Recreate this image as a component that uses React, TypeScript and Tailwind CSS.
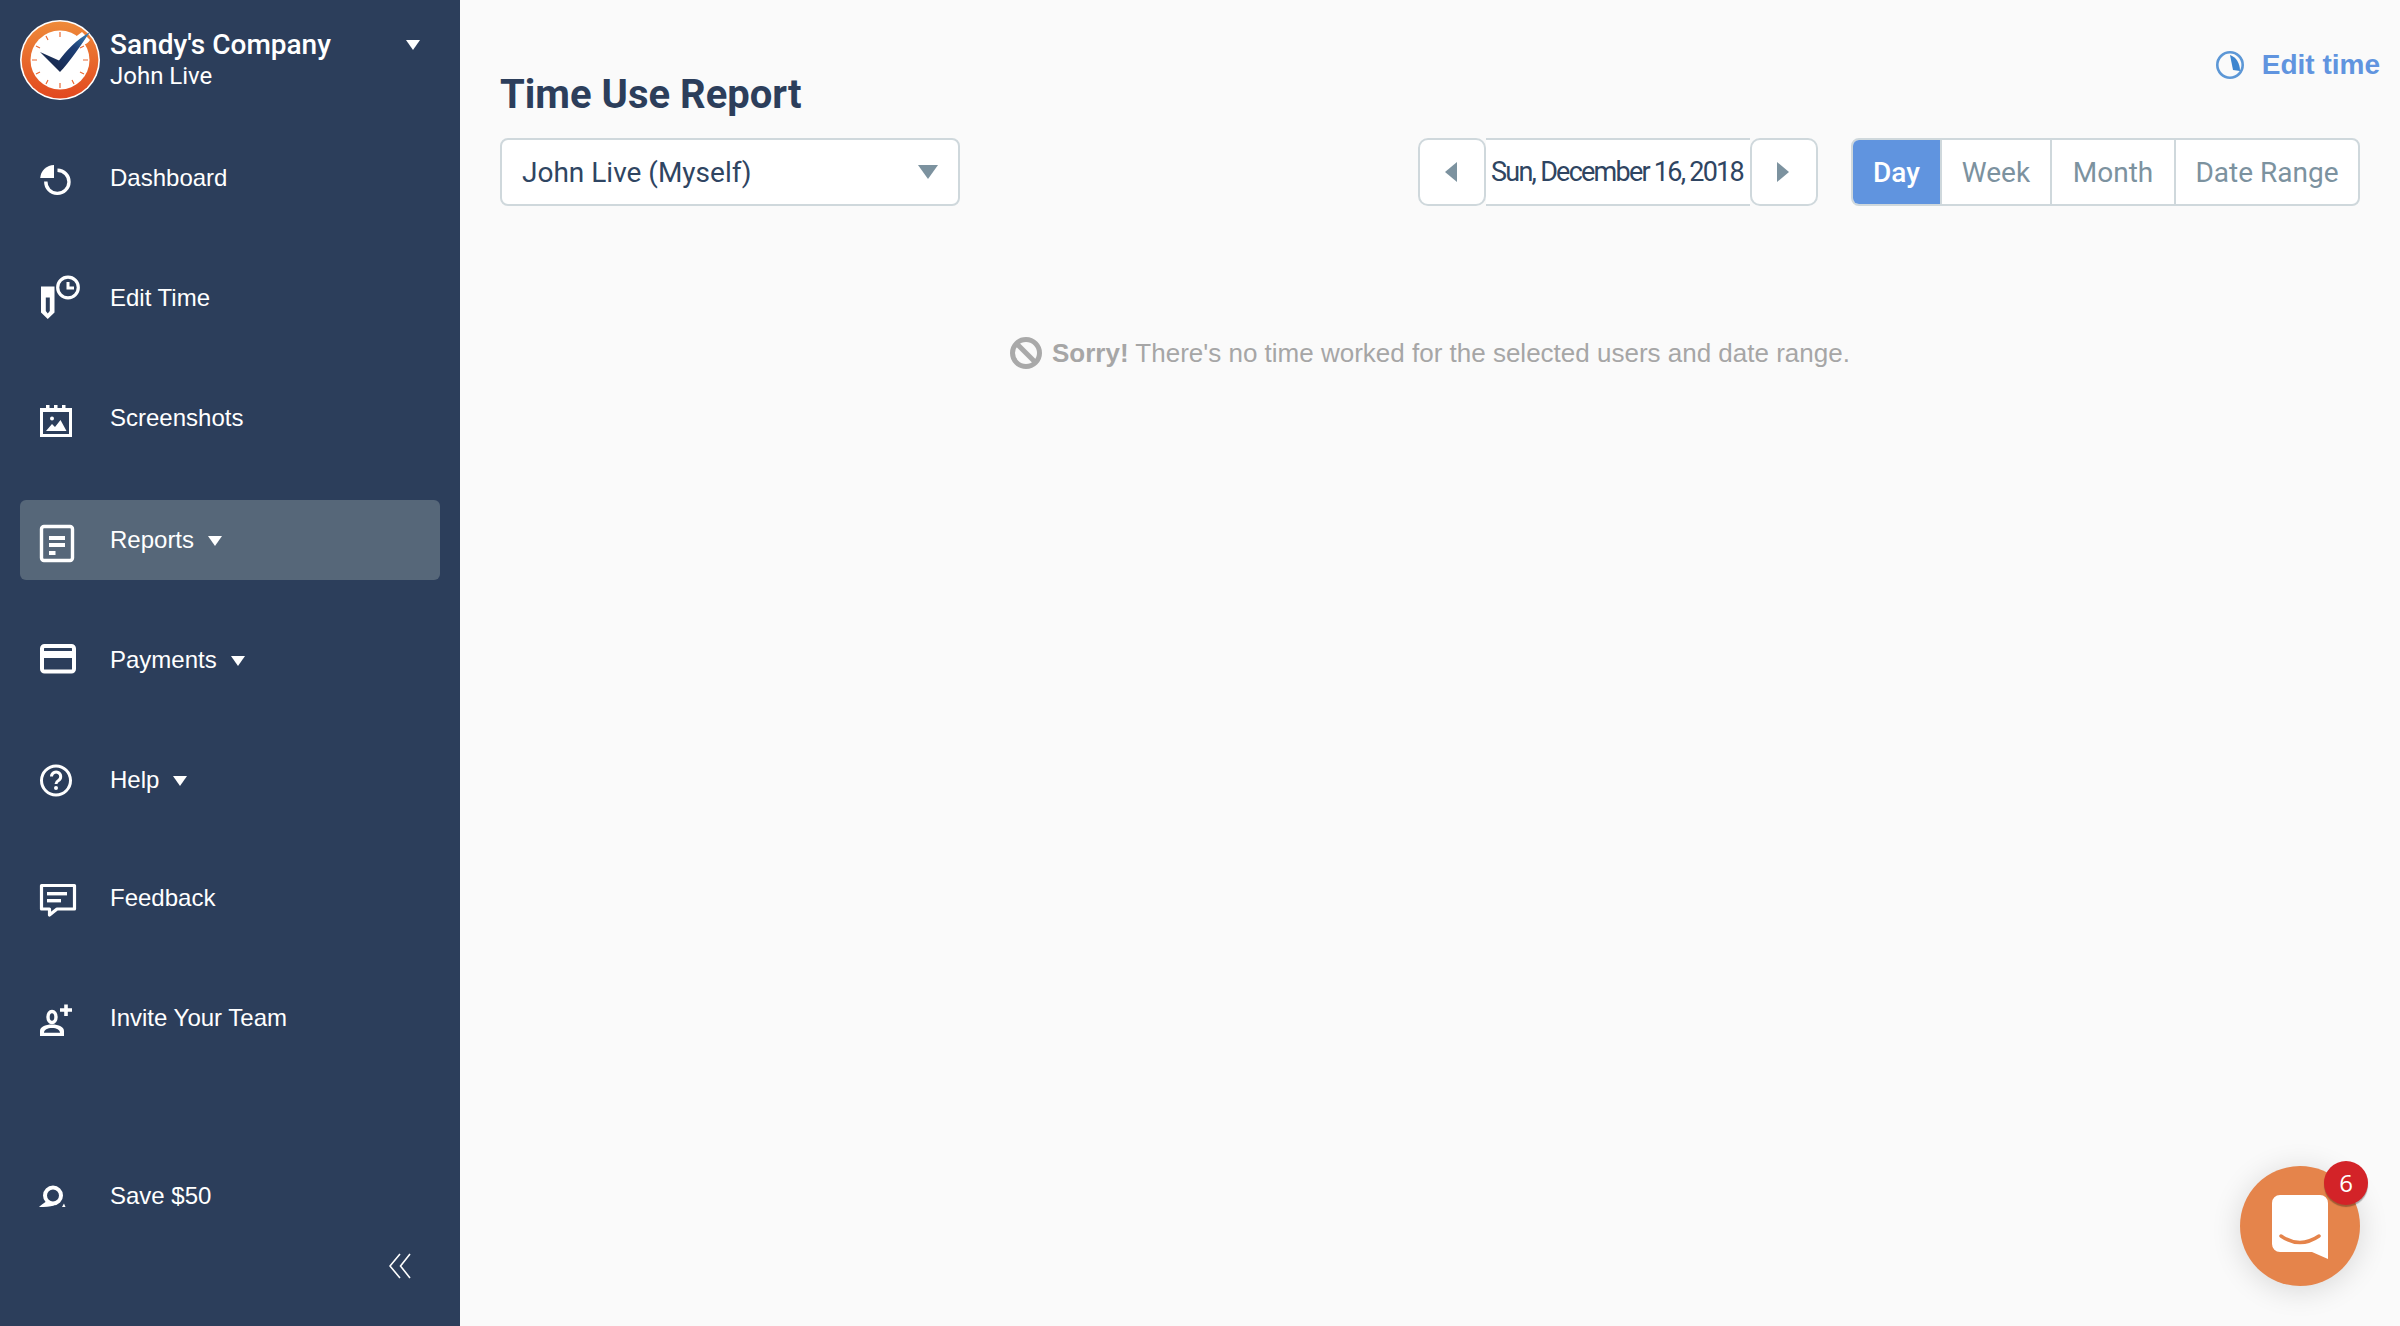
import React from "react";

const white = "#ffffff";
const Svg = ({ children }: { children: React.ReactNode }) => (
  <svg width="40" height="40" viewBox="0 0 40 40" fill="none" className="overflow-visible shrink-0">{children}</svg>
);

const DashIcon = () => (
  <Svg>
    <path d="M14 8V21H0.2A14 14 0 0 1 14 8Z" fill={white} />
    <path d="M17.5 13.2A11.6 11.6 0 1 1 5.8 24.5" stroke={white} strokeWidth="3.4" />
  </Svg>
);
const EditIcon = () => (
  <Svg>
    <path d="M1 9.5H14.5V35.5L7.75 42L1 35.5ZM5.8 20.5V34L7.75 36.5L9.8 34V20.5Z" fill={white} fillRule="evenodd" />
    <circle cx="28" cy="10.5" r="10.3" stroke={white} strokeWidth="3.2" />
    <path d="M26.5 5V12.5H34V9.5H29.5V5Z" fill={white} />
  </Svg>
);
const ShotIcon = () => (
  <Svg>
    <rect x="1.5" y="13" width="29" height="25.5" stroke={white} strokeWidth="3" />
    <rect x="6" y="8" width="3.5" height="6" fill={white} />
    <rect x="14" y="8" width="3.5" height="6" fill={white} />
    <rect x="22" y="8" width="3.5" height="6" fill={white} />
    <rect x="0" y="11" width="32" height="4" fill={white} />
    <circle cx="12" cy="21.5" r="2" fill={white} />
    <path d="M6 34L12 27L15 30L20.5 23L26.5 34Z" fill={white} />
  </Svg>
);
const ReportIcon = () => (
  <Svg>
    <rect x="1.5" y="6.5" width="31" height="34" rx="2.5" stroke={white} strokeWidth="3.4" />
    <rect x="9" y="16" width="16" height="4" fill={white} />
    <rect x="9" y="23" width="16" height="4" fill={white} />
    <rect x="9" y="31" width="6.5" height="4" fill={white} />
  </Svg>
);
const CardIcon = () => (
  <Svg>
    <rect x="2" y="6" width="32" height="25.5" rx="2.5" stroke={white} strokeWidth="4" />
    <rect x="2" y="11" width="32" height="7" fill={white} />
  </Svg>
);
const HelpIcon = () => (
  <Svg>
    <circle cx="16" cy="20.5" r="14.5" stroke={white} strokeWidth="3" />
    <path d="M11.5 16.5A4.6 4.6 0 1 1 18.5 20.5C17 21.4 16 22.2 16 24" stroke={white} strokeWidth="3" />
    <circle cx="16" cy="28" r="2" fill={white} />
  </Svg>
);
const ChatIcon = () => (
  <Svg>
    <path d="M1.5 8.5H34.5V32H17L9.5 38V32H1.5Z" stroke={white} strokeWidth="3.2" strokeLinejoin="round" />
    <rect x="7" y="15" width="20" height="3.4" fill={white} />
    <rect x="7" y="22" width="14" height="3.4" fill={white} />
  </Svg>
);
const InviteIcon = () => (
  <Svg>
    <ellipse cx="12" cy="20" rx="4" ry="5.5" stroke={white} strokeWidth="3.4" />
    <path d="M0 39V34C0 30 5 27.5 12 27.5C19 27.5 24 30 24 34V39ZM4 35.8H20C20 33 16.5 31 12 31C7.5 31 4 33 4 35.8Z" fill={white} fillRule="evenodd" />
    <path d="M26 7.5V19M20 13H32" stroke={white} strokeWidth="3.6" />
  </Svg>
);
const SaveIcon = () => (
  <Svg>
    <circle cx="13" cy="19.5" r="8" stroke={white} strokeWidth="4" />
    <path d="M-1 31C1 29 4 27 7 25L14 29.5Q8 31 -1 31Z" fill={white} />
    <path d="M22 31L24 27.5L25.5 31Z" fill={white} />
  </Svg>
);

const Caret = ({ className }: { className: string }) => (
  <svg width="14" height="10" viewBox="0 0 14 10" className={className}>
    <path d="M0 0H14L7 10Z" fill="currentColor" />
  </svg>
);

const Logo = () => (
  <svg width="80" height="80" viewBox="0 0 80 80" className="shrink-0">
    <defs>
      <linearGradient id="ring" x1="0" y1="0" x2="0" y2="1">
        <stop offset="0" stopColor="#ee8a3a" />
        <stop offset="1" stopColor="#e2481f" />
      </linearGradient>
      <linearGradient id="tick" x1="0" y1="1" x2="1" y2="0">
        <stop offset="0" stopColor="#16213f" />
        <stop offset="0.65" stopColor="#1d3f76" />
        <stop offset="1" stopColor="#3c86bb" />
      </linearGradient>
    </defs>
    <circle cx="40" cy="40" r="40" fill={white} />
    <circle cx="40" cy="40" r="38.4" fill="url(#ring)" />
    <circle cx="40" cy="40" r="29.5" fill={white} />
    <g stroke="#ea6a35" strokeWidth="1.2">
      <path d="M40 12V17M40 63V68M12 40H17M63 40H68M26 16L28 20M54 64L52 60M16 26L20 28M64 54L60 52M16 54L20 52M26 64L28 60M60 28L64 26" />
    </g>
    <path d="M54 18L62 12L70 20Q66 26 60 24Z" fill={white} />
    <path d="M20 32L39 40.5C46 31 56 20 70 12C61 25 49 43 40 52Z" fill="url(#tick)" />
  </svg>
);

type Item = { label: string; icon: React.ReactNode; caret?: boolean; active?: boolean; cls: string; up?: boolean };
const items: Item[] = [
  { label: "Dashboard", icon: <DashIcon />, cls: "", up: true },
  { label: "Edit Time", icon: <EditIcon />, cls: "", up: true },
  { label: "Screenshots", icon: <ShotIcon />, cls: "", up: true },
  { label: "Reports", icon: <ReportIcon />, caret: true, active: true, cls: "mt-[2px]" },
  { label: "Payments", icon: <CardIcon />, caret: true, cls: "" },
  { label: "Help", icon: <HelpIcon />, caret: true, cls: "" },
  { label: "Feedback", icon: <ChatIcon />, cls: "-mt-[2px]", up: true },
  { label: "Invite Your Team", icon: <InviteIcon />, cls: "", up: true },
];

const NavRow = ({ item }: { item: Item }) => (
  <div className={`h-[120px] flex items-center ${item.cls}`}>
    <div className={`h-[80px] w-full rounded-[6px] flex items-center pl-[20px] ${item.active ? "bg-[#566779]" : ""}`}>
      <div className={`w-[70px] flex ${item.up ? "-translate-y-px" : ""}`}>{item.icon}</div>
      <span className="text-[24px] text-white">{item.label}</span>
      {item.caret && <Caret className="ml-[14px] mt-[1px] text-white" />}
    </div>
  </div>
);

export default function App() {
  return (
    <div className="flex h-[1326px] w-[2400px] overflow-hidden bg-[#fafafa] font-['Liberation_Sans',Arial,sans-serif] relative">
      <aside className="w-[460px] shrink-0 bg-[#2c3e5b] px-[20px] flex flex-col">
        <div className="h-[118px] shrink-0 flex items-start pt-[20px]">
          <Logo />
          <div className="ml-[10px] flex-1 font-['Roboto',sans-serif] text-white">
            <div className="text-[28px] leading-[32px] font-medium mt-[9px]">Sandy's Company</div>
            <div className="text-[24px] leading-[28px] mt-[1px]">John Live</div>
          </div>
          <Caret className="mt-[20px] mr-[20px] text-white" />
        </div>
        <nav className="flex flex-col">
          {items.map((it) => (
            <NavRow key={it.label} item={it} />
          ))}
        </nav>
        <div className="mt-auto">
          <div className="h-[40px] flex items-center mb-[37px] pl-[20px]">
            <div className="w-[70px] flex"><SaveIcon /></div>
            <span className="text-[24px] text-white">Save $50</span>
          </div>
          <div className="flex justify-end pr-[29px] mb-[47px]">
            <svg width="22" height="26" viewBox="0 0 22 26" fill="none">
              <path d="M11 1L1 13L11 25M21 1L11.5 13L21 25" stroke={white} strokeWidth="1.6" />
            </svg>
          </div>
        </div>
      </aside>

      <main className="flex-1 pl-[40px] pr-[40px]">
        <div className="flex justify-between items-start h-[138px]">
          <h1 className="font-['Roboto',sans-serif] font-bold text-[40px] leading-[48px] text-[#2c3e5b] mt-[71px]">Time Use Report</h1>
          <div className="flex items-center mt-[46px] -mr-[20px]">
            <svg width="30" height="30" viewBox="0 0 30 30" fill="none">
              <circle cx="15" cy="15" r="12.7" stroke="#5c97d6" strokeWidth="2.6" />
              <path d="M15 5C21 7 25 13 25 21L18 20Z" fill="#3d85cf" />
            </svg>
            <span className="ml-[17px] text-[28px] leading-[38px] font-bold text-[#6094df]">Edit time</span>
          </div>
        </div>

        <div className="flex items-start">
          <div className="w-[460px] h-[68px] bg-white border-2 border-[#cfd8dc] rounded-[8px] flex items-center justify-between pl-[20px] pr-[20px] font-['Roboto',sans-serif] text-[28px] text-[#2f4562]">
            <span className="mt-[1px]">John Live (Myself)</span>
            <svg width="20" height="14" viewBox="0 0 20 14"><path d="M0 0H20L10 14Z" fill="#7c929f" /></svg>
          </div>
          <div className="ml-auto flex h-[68px] font-['Roboto',sans-serif]">
            <div className="w-[68px] bg-white border-2 border-[#cfd8dc] rounded-[10px] flex items-center justify-center text-[#7c929f] pr-[3px]">
              <svg width="12" height="20" viewBox="0 0 12 20"><path d="M12 0V20L0 10Z" fill="currentColor" /></svg>
            </div>
            <div className="w-[264px] bg-white border-y-2 border-[#cfd8dc] flex items-center justify-center text-[27px] tracking-[-1.75px] text-[#2f4562] whitespace-nowrap pr-[2px]"><span className="mt-[1px]">Sun, December 16, 2018</span></div>
            <div className="w-[68px] bg-white border-2 border-[#cfd8dc] rounded-[10px] flex items-center justify-center text-[#7c929f] pr-[3px]">
              <svg width="12" height="20" viewBox="0 0 12 20"><path d="M0 0V20L12 10Z" fill="currentColor" /></svg>
            </div>
          </div>
          <div className="ml-[33px] flex h-[68px] bg-white border-2 border-[#cfd8dc] rounded-[8px] font-['Roboto',sans-serif] text-[28px] text-[#7c929f] overflow-hidden">
            <div className="-my-[2px] -ml-[2px] w-[89px] bg-[#6094df] text-white font-medium flex items-center justify-center pt-[1px] pl-[2px]">Day</div>
            <div className="w-[110px] border-l-2 border-[#cfd8dc] flex items-center justify-center pt-[1px]">Week</div>
            <div className="w-[124px] border-l-2 border-[#cfd8dc] flex items-center justify-center pt-[1px]">Month</div>
            <div className="w-[184px] border-l-2 border-[#cfd8dc] flex items-center justify-center pt-[1px]">Date Range</div>
          </div>
        </div>

        <div className="mt-[130px] flex items-center text-[26px] leading-[32px] text-[#a6a6a6] ml-[509px]">
          <svg width="34" height="34" viewBox="0 0 34 34" fill="none" className="shrink-0">
            <circle cx="17" cy="17" r="13.5" stroke="#a9a9a9" strokeWidth="5" />
            <path d="M8 8L26 26" stroke="#a9a9a9" strokeWidth="5" />
          </svg>
          <span className="ml-[9px] whitespace-nowrap"><b>Sorry!</b> There's no time worked for the selected users and date range.</span>
        </div>
      </main>

      <div className="absolute left-[2240px] top-[1166px] w-[120px] h-[120px] rounded-full bg-[#e5844b] shadow-[0_4px_30px_rgba(0,0,0,0.14)] flex items-center justify-center">
        <svg width="56" height="64" viewBox="0 0 56 64" className="mt-[2px]">
          <path d="M8 0H48A8 8 0 0 1 56 8V64L40 57H8A8 8 0 0 1 0 49V8A8 8 0 0 1 8 0Z" fill={white} />
          <path d="M9 41Q28 54 47 41" stroke="#e5844b" strokeWidth="3.5" fill="none" strokeLinecap="round" />
        </svg>
        <div className="absolute left-[84px] top-[-5px] w-[44px] h-[44px] rounded-full bg-[#d32328] shadow-[0_2px_1px_rgba(0,0,0,0.3)] flex items-center justify-center text-white text-[24px] font-['Open_Sans',sans-serif]">6</div>
      </div>
    </div>
  );
}
